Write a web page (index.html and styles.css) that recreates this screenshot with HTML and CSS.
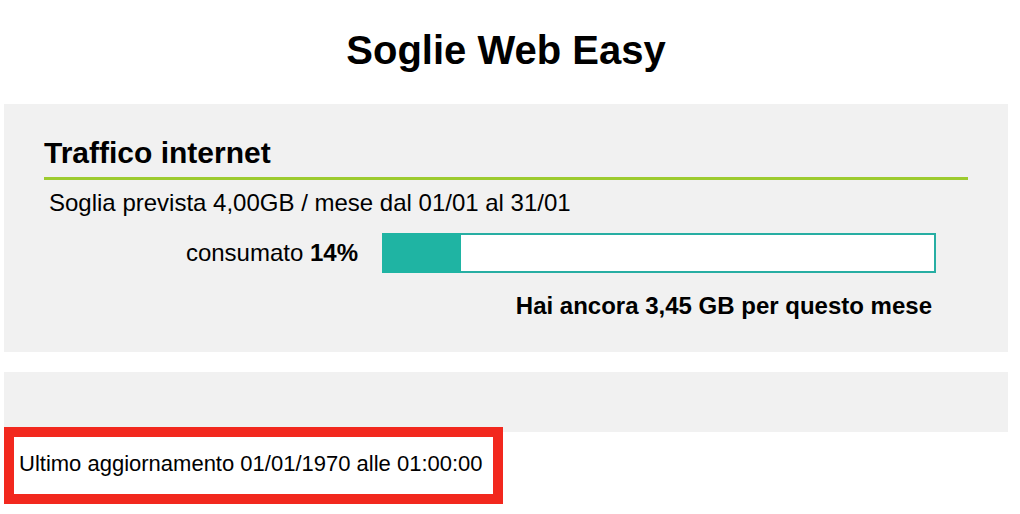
FILE: index.html
```html
<!DOCTYPE html>
<html lang="it">
<head>
<meta charset="utf-8">
<title>Soglie Web Easy</title>
<link rel="stylesheet" href="styles.css">
</head>
<body>
<div class="page">
  <h1 class="title">Soglie Web Easy</h1>
  <section class="panel">
    <h2 class="panel-title">Traffico internet</h2>
    <p class="threshold">Soglia prevista 4,00GB / mese dal 01/01 al 31/01</p>
    <div class="usage">
      <div class="usage-label">consumato <strong>14%</strong></div>
      <div class="bar"><div class="bar-fill" style="width: 14.3%"></div></div>
    </div>
    <p class="remaining">Hai ancora 3,45 GB per questo mese</p>
  </section>
  <section class="panel panel-empty"></section>
  <div class="updated">Ultimo aggiornamento 01/01/1970 alle 01:00:00</div>
</div>
</body>
</html>
```

FILE: styles.css
```css
html, body {
  margin: 0;
  padding: 0;
  background: #ffffff;
}

body {
  font-family: "Liberation Sans", Arial, Helvetica, sans-serif;
  color: #000000;
}

.page {
  width: 1004px;
  margin-left: 4px;
  display: flex;
  flex-direction: column;
}

.title {
  margin: 27px 0 31px;
  font-size: 40px;
  line-height: 46px;
  font-weight: bold;
  text-align: center;
}

.panel {
  background: #f1f1f1;
  padding: 32px 40px 0;
  height: 248px;
  box-sizing: border-box;
  display: flex;
  flex-direction: column;
}

.panel-title {
  margin: 0;
  font-size: 30px;
  line-height: 34px;
  font-weight: bold;
  padding-bottom: 7px;
  border-bottom: 3px solid #9dcb2f;
}

.threshold {
  margin: 9px 0 0 5px;
  font-size: 24px;
  line-height: 28px;
}

.usage {
  margin-top: 16px;
  display: flex;
  align-items: center;
  gap: 24px;
}

.usage-label {
  width: 314px;
  text-align: right;
  font-size: 24px;
  line-height: 28px;
}

.usage-label strong {
  font-weight: bold;
}

.bar {
  width: 554px;
  height: 40px;
  box-sizing: border-box;
  border: 2px solid #27aea3;
  background: #ffffff;
  position: relative;
}

.bar-fill {
  position: absolute;
  left: -2px;
  top: -2px;
  bottom: -2px;
  background: #1fb4a3;
}

.remaining {
  margin: 19px 36px 0 0;
  font-size: 24px;
  line-height: 28px;
  font-weight: bold;
  text-align: right;
}

.panel-empty {
  margin-top: 20px;
  height: 60px;
  padding: 0;
}

.updated {
  margin-top: -5px;
  width: fit-content;
  border: 10px solid #f2281e;
  background: #ffffff;
  padding: 14px 10px 17px 5px;
  font-size: 22px;
  line-height: 26px;
  position: relative;
}
```
